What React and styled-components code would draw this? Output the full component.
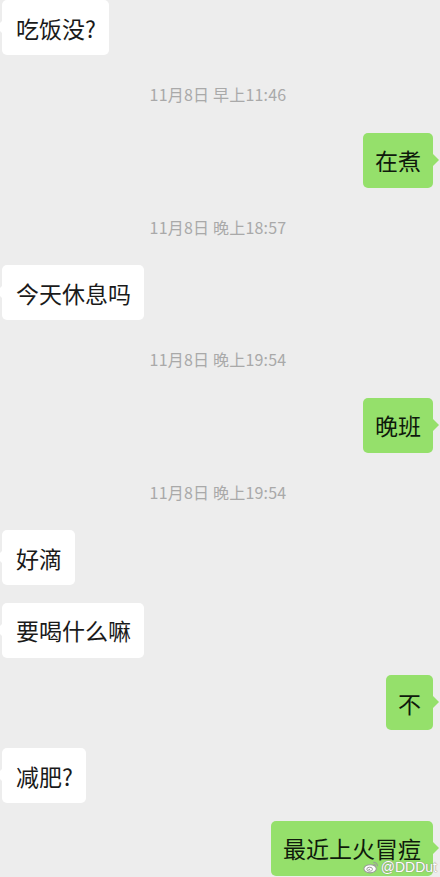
import styled, { createGlobalStyle } from "styled-components";

const GlobalStyle = createGlobalStyle`
  html, body {
    margin: 0;
    padding: 0;
    background: #ededed;
  }
  body {
    font-family: "Noto Sans CJK SC", "Noto Sans", sans-serif;
  }
`;

const messages = [
  { type: "in", text: "吃饭没?" },
  { type: "time", text: "11月8日 早上11:46" },
  { type: "out", text: "在煮" },
  { type: "time", text: "11月8日 晚上18:57" },
  { type: "in", text: "今天休息吗" },
  { type: "time", text: "11月8日 晚上19:54" },
  { type: "out", text: "晚班" },
  { type: "time", text: "11月8日 晚上19:54" },
  { type: "in", text: "好滴" },
  { type: "in", text: "要喝什么嘛" },
  { type: "out", text: "不" },
  { type: "in", text: "减肥?" },
  { type: "out", text: "最近上火冒痘", mark: true },
];

const WeiboLogo = () => (
  <svg width="16" height="14" viewBox="0 0 18 15">
    <ellipse cx="8" cy="9.5" rx="7" ry="4.6" fill="#fff" stroke="#9a9a9a" strokeWidth="1.2" />
    <ellipse cx="7.5" cy="10" rx="3.2" ry="2.3" fill="none" stroke="#9a9a9a" strokeWidth="1.1" />
    <circle cx="7" cy="10.3" r="0.9" fill="#9a9a9a" />
    <path d="M11.5 2.2 A4.5 4.5 0 0 1 16.4 6.8" fill="none" stroke="#9a9a9a" strokeWidth="1.2" />
    <path d="M11.8 4.4 A2.3 2.3 0 0 1 14.2 6.9" fill="none" stroke="#9a9a9a" strokeWidth="1.1" />
  </svg>
);

const App = () => (
  <>
    <GlobalStyle />
    <Chat>
      {messages.map((m, i) =>
        m.type === "time" ? (
          <Time key={i}>{m.text}</Time>
        ) : (
          <Row key={i} $out={m.type === "out"}>
            <Bubble $out={m.type === "out"}>
              {m.text}
              {m.mark && (
                <Watermark>
                  <WeiboLogo />
                  <span>@DDDut</span>
                </Watermark>
              )}
            </Bubble>
          </Row>
        )
      )}
    </Chat>
  </>
);

const Chat = styled.div`
  width: 440px;
  height: 877px;
  overflow: hidden;
  display: flex;
  flex-direction: column;
  background: #ededed;
`;

const Row = styled.div`
  display: flex;
  justify-content: ${(p) => (p.$out ? "flex-end" : "flex-start")};
  padding: ${(p) => (p.$out ? "0 7px 0 0" : "0 0 0 2px")};
  margin-bottom: 17.7px;
  &:has(+ div[data-time]) {
    margin-bottom: 0;
  }
`;

const Bubble = styled.div`
  position: relative;
  height: 55px;
  box-sizing: border-box;
  display: flex;
  align-items: center;
  padding: ${(p) => (p.$out ? "0 12px" : "0 13px 0 14px")};
  border-radius: 5px;
  font-size: 23px;
  color: ${(p) => (p.$out ? "#0f1a0c" : "#1a1a1a")};
  background: ${(p) => (p.$out ? "#95e06b" : "#ffffff")};
  &::after {
    content: "";
    position: absolute;
    top: 21px;
    ${(p) => (p.$out ? "right: -6px;" : "left: -6px;")}
    border-top: 6px solid transparent;
    border-bottom: 6px solid transparent;
    ${(p) =>
      p.$out ? "border-left: 6px solid #95e06b;" : "border-right: 6px solid #ffffff;"}
  }
`;

const Time = styled.div.attrs({ "data-time": true })`
  height: 20px;
  line-height: 20px;
  margin: 29px 0 28.5px;
  text-align: center;
  font-size: 16px;
  color: #a9a9a9;
  letter-spacing: 0.2px;
  padding-right: 4px;
`;

const Watermark = styled.div`
  position: absolute;
  right: -4px;
  bottom: 1px;
  display: flex;
  align-items: center;
  gap: 2px;
  font-family: "Liberation Sans", Arial, sans-serif;
  font-size: 14px;
  color: #fff;
  text-shadow: 0 0 1px #8a8a8a, 0 0 1px #8a8a8a;
  svg {
    margin-top: 1px;
  }
`;

export default App;
